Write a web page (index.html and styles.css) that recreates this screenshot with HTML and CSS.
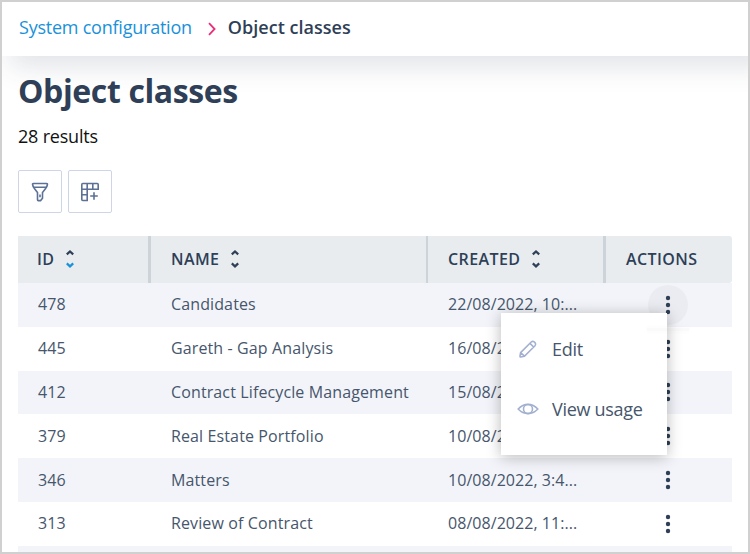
FILE: index.html
```html
<!DOCTYPE html>
<html lang="en">
<head>
    <meta charset="UTF-8">
    <meta name="viewport" content="width=device-width, initial-scale=1.0">
    <title>Object classes</title>
    <link rel="stylesheet" href="styles.css">
</head>
<body>
    <svg class="sprite" width="0" height="0">
        <symbol id="sort" viewBox="0 0 10 20">
            <path d="M1.8 5.4 L5 2.4 L8.2 5.4" />
            <path class="down" d="M1.8 14.4 L5 17.4 L8.2 14.4" />
        </symbol>
        <symbol id="dots" viewBox="0 0 6 20">
            <circle cx="3" cy="3" r="2.2" />
            <circle cx="3" cy="10" r="2.2" />
            <circle cx="3" cy="17" r="2.2" />
        </symbol>
    </svg>

    <header class="breadcrumb">
        <a class="crumb" href="#">System configuration</a>
        <svg class="chevron" width="8" height="14" viewBox="0 0 8 14"><path d="M1 1.2 L6.6 7 L1 12.8" /></svg>
        <span class="current">Object classes</span>
    </header>

    <main>
        <h1>Object classes</h1>
        <p class="results">28 results</p>

        <div class="toolbar">
            <button class="tool" aria-label="Filter">
                <svg width="18" height="20" viewBox="0 0 18 20">
                    <path d="M2.3 1.5 H15.7 Q16.6 1.5 16.4 2.5 Q16 5 14.6 6.5 L11.5 10.6 V16.3 L9.6 18.6 H7.2 Q6.5 18.6 6.5 17.8 V10.6 L3.4 6.5 Q2 5 1.6 2.5 Q1.4 1.5 2.3 1.5 Z" />
                    <path d="M2.2 5.2 H15.8 M9 12.4 V15.2" />
                </svg>
            </button>
            <button class="tool" aria-label="Columns">
                <svg width="18" height="20" viewBox="0 0 18 20">
                    <path d="M1.7 1.5 H16.3 Q17.2 1.5 17.2 2.4 V7.2 H6.2 V18.5 H1.7 Q.8 18.5 .8 17.6 V2.4 Q.8 1.5 1.7 1.5 Z" />
                    <path d="M6.2 1.5 V7.2 M11.8 1.5 V7.2 M.8 7.2 H6.2 M.8 12.8 H6.2 M13 10.2 V17.8 M9.2 14 H16.8" />
                </svg>
            </button>
        </div>

        <table>
            <colgroup>
                <col class="col-id">
                <col class="col-name">
                <col class="col-created">
                <col class="col-actions">
            </colgroup>
            <thead>
                <tr>
                    <th><div class="head active">ID <svg class="sort"><use href="#sort" /></svg></div></th>
                    <th><div class="head">NAME <svg class="sort"><use href="#sort" /></svg></div></th>
                    <th><div class="head">CREATED <svg class="sort"><use href="#sort" /></svg></div></th>
                    <th><div class="head">ACTIONS</div></th>
                </tr>
            </thead>
            <tbody>
                <tr>
                    <td>478</td><td>Candidates</td><td>22/08/2022, 10:...</td>
                    <td>
                        <div class="actions open">
                            <svg class="dots"><use href="#dots" /></svg>
                            <div class="menu">
                                <a class="item" href="#">
                                    <svg width="22" height="20" viewBox="0 0 22 20">
                                        <path d="M3.6 13.6 L14.2 3 Q15.8 1.6 17.4 3 L18 3.6 Q19.4 5.2 18 6.8 L7.4 17.2 L3.6 18 Q2.9 18 3 17.2 Z M3.6 13.6 L7.4 17.2 M13 4.4 L16.6 8" />
                                    </svg>
                                    Edit
                                </a>
                                <a class="item" href="#">
                                    <svg width="22" height="20" viewBox="0 0 22 20">
                                        <path d="M1.2 10 Q5.5 5.4 11 5.4 T20.8 10 Q16.5 14.6 11 14.6 T1.2 10 Z" />
                                        <circle cx="11" cy="10" r="4.5" />
                                    </svg>
                                    View usage
                                </a>
                            </div>
                        </div>
                    </td>
                </tr>
                <tr>
                    <td>445</td><td>Gareth - Gap Analysis</td><td>16/08/2022, 11:...</td>
                    <td><div class="actions"><svg class="dots"><use href="#dots" /></svg></div></td>
                </tr>
                <tr>
                    <td>412</td><td>Contract Lifecycle Management</td><td>15/08/2022, 10:...</td>
                    <td><div class="actions"><svg class="dots"><use href="#dots" /></svg></div></td>
                </tr>
                <tr>
                    <td>379</td><td>Real Estate Portfolio</td><td>10/08/2022, 3:5...</td>
                    <td><div class="actions"><svg class="dots"><use href="#dots" /></svg></div></td>
                </tr>
                <tr>
                    <td>346</td><td>Matters</td><td>10/08/2022, 3:4...</td>
                    <td><div class="actions"><svg class="dots"><use href="#dots" /></svg></div></td>
                </tr>
                <tr>
                    <td>313</td><td>Review of Contract</td><td>08/08/2022, 11:...</td>
                    <td><div class="actions"><svg class="dots"><use href="#dots" /></svg></div></td>
                </tr>
                <tr class="cut">
                    <td></td><td></td><td></td><td></td>
                </tr>
            </tbody>
        </table>
    </main>
</body>
</html>
```
FILE: styles.css
```css
* {
    box-sizing: border-box;
}
body {
    margin: 0;
    height: 554px;
    overflow: hidden;
    border: 2px solid #d0d0d0;
    background: #fff;
    font-family: "Open Sans", "Noto Sans", sans-serif;
    color: #2e3f57;
}
.sprite {
    position: absolute;
}
.breadcrumb {
    display: flex;
    align-items: center;
    height: 54px;
    margin-right: -30px;
    padding: 0 0 4px 17px;
    font-size: 18px;
    background: #fff;
    box-shadow: 0 18px 28px -8px rgba(46, 63, 87, 0.15);
}
.crumb {
    color: #1a91da;
    letter-spacing: -0.23px;
    text-decoration: none;
}
.chevron {
    margin: 3px 12px 0 16px;
    fill: none;
    stroke: #e8307a;
    stroke-width: 1.8;
}
.current {
    font-weight: 600;
    letter-spacing: 0.03px;
}
main {
    height: 496px;
    overflow: hidden;
    padding: 0 16px;
}
h1 {
    margin: 12px 0 0;
    font-size: 32px;
    line-height: 46px;
    font-weight: 700;
    letter-spacing: -0.38px;
}
.results {
    margin: 9px 0 0;
    font-size: 18px;
    line-height: 26px;
    letter-spacing: -0.2px;
    color: #111;
}
.toolbar {
    display: flex;
    gap: 6px;
    margin: 21px 0 23px;
}
.tool {
    display: flex;
    align-items: center;
    justify-content: center;
    width: 44px;
    height: 43px;
    padding: 0;
    border: 1px solid #cdd5e6;
    border-radius: 2px;
    background: #fff;
}
.tool svg {
    margin-top: 1px;
    fill: none;
    stroke: #5d7096;
    stroke-width: 1.6;
}
table {
    width: 714px;
    table-layout: fixed;
    border-collapse: separate;
    border-spacing: 0;
    font-size: 16px;
}
.col-id {
    width: 133px;
}
.col-name {
    width: 277px;
}
.col-created {
    width: 178px;
}
th {
    height: 47px;
    padding: 0 0 2px 20px;
    background: #e8ecef;
    border-right: 3px solid #cdd4d9;
    text-align: left;
    font-weight: 600;
    letter-spacing: 0.4px;
}
th:first-child {
    padding-left: 19px;
}
th:nth-child(2) {
    border-right-width: 2px;
}
th:last-child {
    border-right: 0;
    border-radius: 0 3px 3px 0;
}
.head {
    display: flex;
    align-items: center;
}
.sort {
    width: 10px;
    height: 20px;
    margin: 1px 0 0 11px;
    fill: none;
    stroke: #2e3f57;
    stroke-width: 2.2;
}
.down {
    stroke: var(--down, #2e3f57);
}
.active {
    --down: #1a91da;
}
td {
    height: 43.8px;
    padding: 0 0 1px 20px;
    color: #46566c;
    letter-spacing: 0.12px;
    white-space: nowrap;
}
td:nth-child(3) {
    letter-spacing: 0.05px;
}
tbody tr:nth-child(odd) {
    background: #f3f4f9;
}
.actions {
    position: relative;
    display: flex;
    align-items: center;
    justify-content: center;
    width: 40px;
    height: 40px;
    margin: 1px 0 0 22px;
    border-radius: 50%;
}
.dots {
    width: 6px;
    height: 20px;
    fill: #2e3f57;
}
.open {
    margin-top: 2px;
    background: #ebecf1;
}
/* soft shadow left under the pressed button */
.open::after {
    content: "";
    position: absolute;
    z-index: 3;
    left: -1px;
    top: 43px;
    width: 42px;
    height: 3px;
    background: rgba(0, 0, 0, 0.02);
    box-shadow: 0 0 5px 1px rgba(0, 0, 0, 0.02);
}
.menu {
    position: absolute;
    z-index: 2;
    top: 28px;
    right: 21px;
    width: 166px;
    height: 142px;
    padding: 6px 0 0 16px;
    background: #fff;
    box-shadow: 0 2px 14px rgba(0, 0, 0, 0.28);
}
.item {
    display: flex;
    align-items: center;
    gap: 13px;
    height: 60px;
    font-size: 18px;
    letter-spacing: -0.3px;
    color: #46566c;
    text-decoration: none;
}
.item svg {
    fill: none;
    stroke: #a3b0d0;
    stroke-width: 1.6;
}
.cut td {
    height: 6px;
    padding: 0;
}
```
